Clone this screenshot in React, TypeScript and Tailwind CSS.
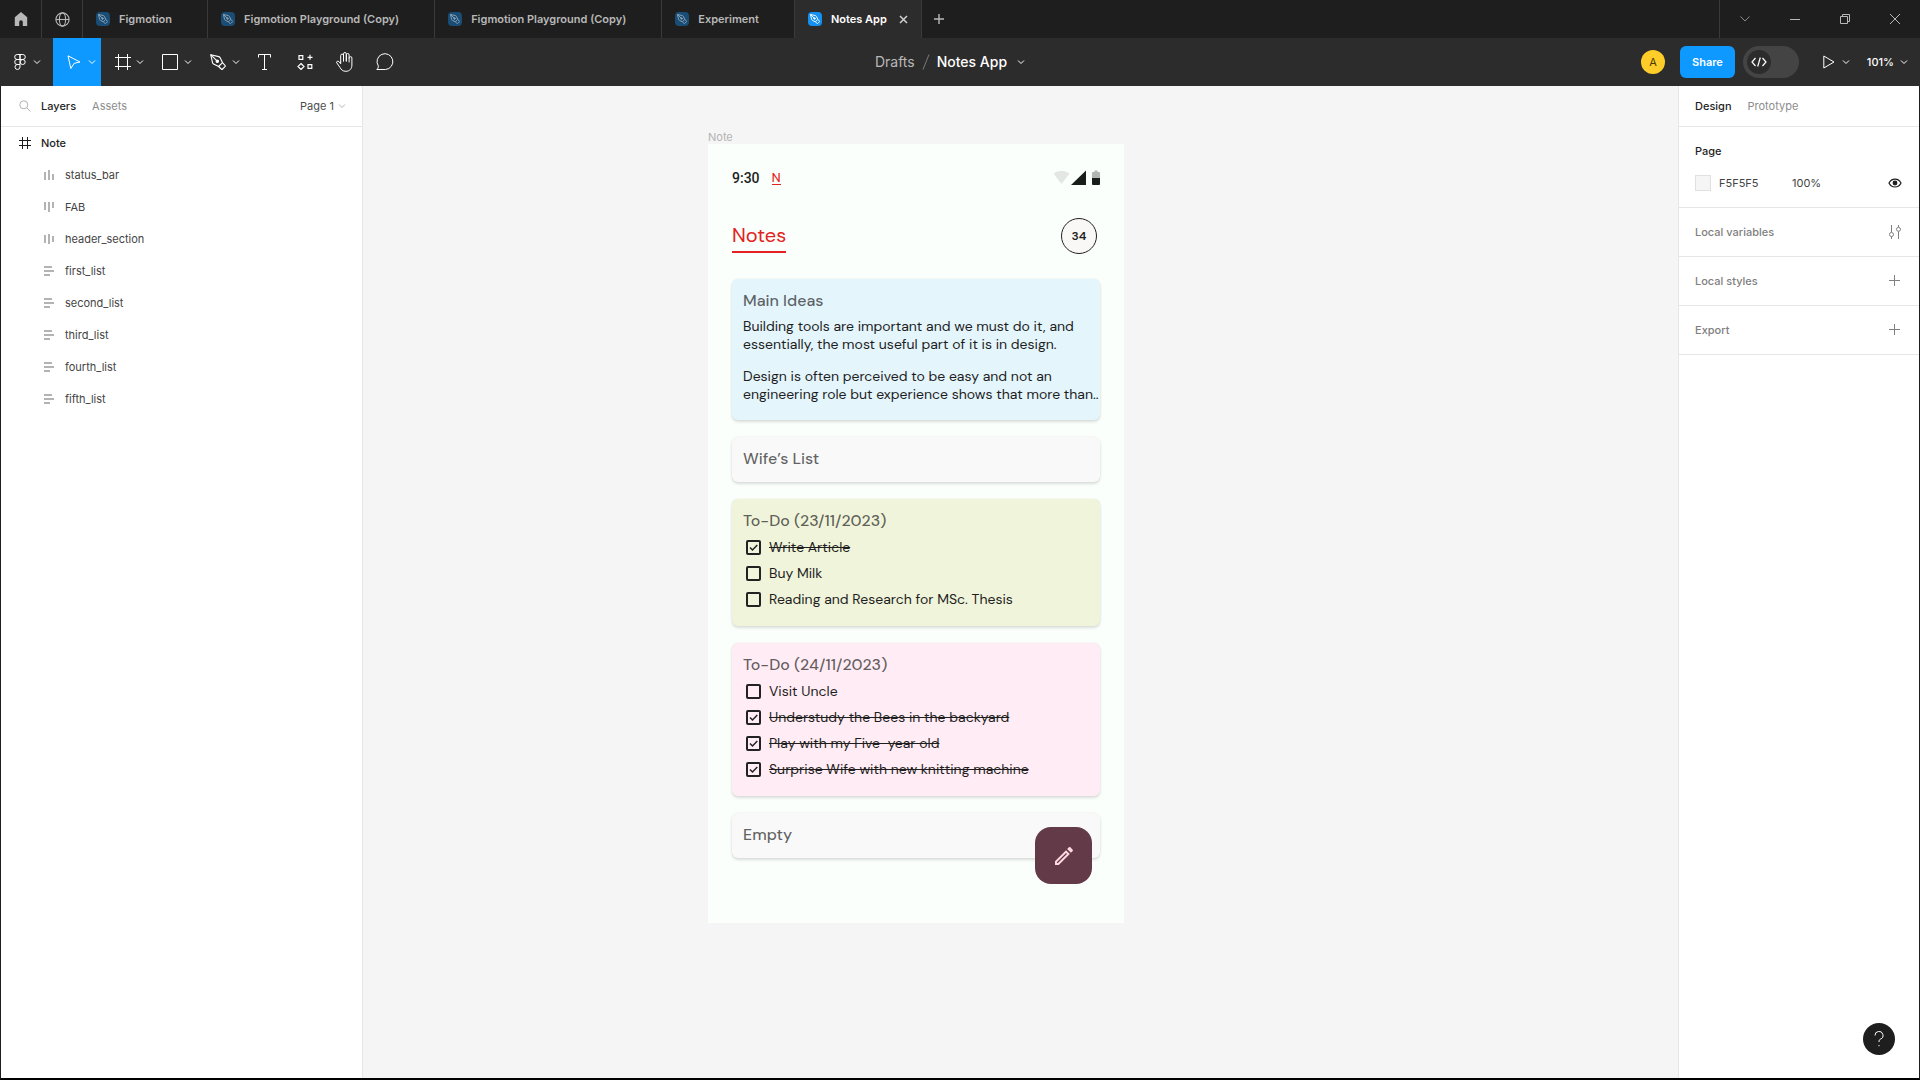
import React from 'react';
import clsx from 'clsx';

const ChevronDown = ({ className }: { className?: string }) => (
  <svg viewBox="0 0 8 8" className={clsx('w-2 h-2 shrink-0', className)} fill="none" stroke="currentColor">
    <path d="M1 2.5 4 5.5 7 2.5" />
  </svg>
);

const PenNib = ({ className, strokeWidth = 1.1 }: { className?: string; strokeWidth?: number }) => (
  <svg viewBox="0 0 16 16" className={className} fill="none" stroke="currentColor" strokeWidth={strokeWidth} strokeLinejoin="round">
    <path d="M.7.7 2.6 8.8c.2.8.8 1.2 1.4 1.5l4.6 2.2 3.9-3.9-2.2-4.6c-.3-.6-.8-1.2-1.5-1.4z" />
    <path d="M.7.7 6.7 6.7" />
    <circle cx="7.3" cy="7.3" r="1.2" fill="currentColor" />
    <path d="m12.5 8.6 2.5 2.7c.4.4.4.9 0 1.3l-2.4 2.4c-.4.4-.9.4-1.3 0l-2.7-2.5" />
  </svg>
);

const Plus = ({ className }: { className?: string }) => (
  <svg viewBox="0 0 12 12" className={className} fill="none" stroke="currentColor">
    <path d="M5.5 0v11M0 5.5h11" />
  </svg>
);

const tabs = [
  { name: 'Figmotion' },
  { name: 'Figmotion Playground (Copy)' },
  { name: 'Figmotion Playground (Copy)' },
  { name: 'Experiment' },
  { name: 'Notes App', active: true },
];

const TabBar = () => (
  <div className="flex h-[38px] bg-[#1e1e1e] text-[#b8b8b8] pl-px">
    <button aria-label="Home" className="w-10 flex items-center justify-center border-r border-[#3a3a3a] box-content">
      <svg viewBox="0 0 14 14" className="w-[14px] h-[14px]" fill="currentColor">
        <path d="M7 0 .8 5.2V14h4.4v-4a1.8 1.8 0 0 1 3.6 0v4h4.4V5.2z" />
      </svg>
    </button>
    <button aria-label="Community" className="w-10 flex items-center justify-center border-r border-[#3a3a3a] box-content">
      <svg viewBox="0 0 15 15" className="w-[15px] h-[15px]" fill="none" stroke="currentColor" strokeWidth="1.1">
        <circle cx="7.5" cy="7.5" r="6.6" />
        <ellipse cx="7.5" cy="7.5" rx="3.1" ry="6.6" />
        <path d="M1 7.5h13" />
      </svg>
    </button>
    {tabs.map((tab, i) => (
      <div
        key={i}
        className={clsx(
          'flex items-center border-r border-[#3a3a3a] pl-[13px] text-[11px] font-semibold',
          tab.active ? 'bg-[#2c2c2c] text-white pr-[13px]' : 'pr-[35px]'
        )}
      >
        <span
          className={clsx(
            'w-[14px] h-[14px] rounded-sm flex items-center justify-center mr-[9px]',
            tab.active ? 'bg-[#1490f0] text-white' : 'bg-[#194d76] text-[#8fa3b3]'
          )}
        >
          <PenNib className="w-[10px] h-[10px]" strokeWidth={1.5} />
        </span>
        <button>{tab.name}</button>
        {tab.active && (
          <button aria-label="Close tab" className="ml-3 text-[#d0d0d0]">
            <svg viewBox="0 0 9 9" className="w-[9px] h-[9px]" fill="none" stroke="currentColor" strokeWidth="1.5">
              <path d="m1 1 7 7M8 1 1 8" />
            </svg>
          </button>
        )}
      </div>
    ))}
    <button aria-label="New tab" className="px-3">
      <svg viewBox="0 0 10 10" className="w-[10px] h-[10px]" fill="none" stroke="currentColor" strokeWidth="1.4">
        <path d="M5 0v10M0 5h10" />
      </svg>
    </button>
    <div className="ml-auto flex border-l border-[#3a3a3a]">
      <button aria-label="Tabs menu" className="w-[50px] flex items-center justify-center text-[#8a8a8a]">
        <svg viewBox="0 0 10 10" className="w-[10px] h-[10px]" fill="none" stroke="currentColor">
          <path d="m.5 2.5 4.5 4.5 4.5-4.5" />
        </svg>
      </button>
      <button aria-label="Minimize" className="w-[50px] flex items-center justify-center">
        <svg viewBox="0 0 10 10" className="w-[10px] h-[10px]" fill="none" stroke="currentColor">
          <path d="M0 5.5h10" />
        </svg>
      </button>
      <button aria-label="Restore" className="w-[50px] flex items-center justify-center">
        <svg viewBox="0 0 10 10" className="w-[10px] h-[10px]" fill="none" stroke="currentColor">
          <path d="M.5 2.5h7v7h-7zM2.5 2.5v-2h7v7h-2" />
        </svg>
      </button>
      <button aria-label="Close" className="w-[50px] flex items-center justify-center">
        <svg viewBox="0 0 10 10" className="w-[10px] h-[10px]" fill="none" stroke="currentColor">
          <path d="m0 0 10 10M10 0 0 10" />
        </svg>
      </button>
    </div>
  </div>
);

const Toolbar = () => (
  <div className="grid grid-cols-[1fr_auto_1fr] h-12 bg-[#2c2c2c] text-white">
    <div className="flex pl-px">
      <button aria-label="Main menu" className="w-[52px] pl-[13px] flex items-center gap-[7px]">
        <svg viewBox="0 0 12 16" className="w-3 h-4" fill="none" stroke="currentColor">
          <path d="M6 .5H3.2a2.5 2.5 0 0 0 0 5H6zM6 5.5H3.2a2.5 2.5 0 0 0 0 5H6zM6 10.5H3.2a2.5 2.5 0 1 0 2.8 2.5zM6 .5h2.8a2.5 2.5 0 0 1 0 5H6z" />
          <circle cx="8.7" cy="8" r="2.5" />
        </svg>
        <ChevronDown />
      </button>
      <button aria-label="Move" className="w-12 pl-[14px] flex items-center gap-[7px] bg-[#0d99ff]">
        <svg viewBox="0 0 14 14" className="w-[14px] h-[14px]" fill="none" stroke="currentColor" strokeLinejoin="round">
          <path d="M1 .8 13 7 7.2 8.3 3.8 13.5z" />
        </svg>
        <ChevronDown />
      </button>
      <button aria-label="Frame" className="w-12 pl-[14px] flex items-center gap-[5px]">
        <svg viewBox="0 0 16 16" className="w-4 h-4" fill="none" stroke="currentColor">
          <path d="M3.5 0v16M12.5 0v16M0 3.5h16M0 12.5h16" />
        </svg>
        <ChevronDown />
      </button>
      <button aria-label="Rectangle" className="w-12 pl-[13px] flex items-center gap-1.5">
        <svg viewBox="0 0 16 16" className="w-4 h-4" fill="none" stroke="currentColor">
          <path d="M.5.5h15v15H.5z" />
        </svg>
        <ChevronDown />
      </button>
      <button aria-label="Pen" className="w-12 pl-[13px] flex items-center gap-1.5">
        <PenNib className="w-4 h-4" />
        <ChevronDown />
      </button>
      <button aria-label="Text" className="w-10 flex items-center justify-center">
        <svg viewBox="0 0 14 16" className="w-[14px] h-4" fill="none" stroke="currentColor">
          <path d="M.5 3.5v-3h12v3M6.5.5v15M4 15.5h5" />
        </svg>
      </button>
      <button aria-label="Resources" className="w-10 flex items-center justify-center">
        <svg viewBox="0 0 16 16" className="w-4 h-4" fill="none" stroke="currentColor" strokeWidth="1.2">
          <path d="M2 1.6h3.8v3.8H2zM11 10.6h3.8v3.8H11zM13 .8v5M10.5 3.3h5M4 9.5l3 3-3 3-3-3z" />
        </svg>
      </button>
      <button aria-label="Hand" className="w-10 flex items-center justify-center">
        <svg viewBox="0 0 18 20" className="w-[18px] h-5" fill="none" stroke="currentColor" strokeLinecap="round" strokeLinejoin="round">
          <path d="M4.7 10V3.5a1.4 1.4 0 0 1 2.8 0V9M7.5 9V1.9a1.4 1.4 0 0 1 2.8 0V9M10.3 9V2.900a1.4 1.4 0 0 1 2.8 0V10M13.1 6a1.4 1.4 0 0 1 2.8 0v7c0 4-2.500 6.300-6 6.300-3.200 0-4.700-1.500-6-4L.7 10.800c-.5-1.300 1-2.300 2.200-1.200l1.800 2.200V10" />
        </svg>
      </button>
      <button aria-label="Comment" className="w-10 flex items-center justify-center">
        <svg viewBox="0 0 18 18" className="w-[18px] h-[18px]" fill="none" stroke="currentColor" strokeLinejoin="round">
          <path d="M.8 16.5c1.2-1 1.7-2.3 1.5-3.6A7.9 7.9 0 1 1 9.500 16.500z" />
        </svg>
      </button>
    </div>
    <div className="flex items-center text-sm pr-5">
      <span className="text-[#b8b8b8]">Drafts</span>
      <svg viewBox="0 0 8 16" className="w-2 h-4 mx-[7px] text-[#7a7a7a]" fill="none" stroke="currentColor">
        <path d="M7 .5 1 15.500" />
      </svg>
      <button className="flex items-center gap-[10px] font-medium">
        Notes App
        <ChevronDown />
      </button>
    </div>
    <div className="flex items-center justify-end pr-3 text-[11px]">
      <span className="w-6 h-6 rounded-full bg-[#ffcd29] text-[#4a3a08] flex items-center justify-center">A</span>
      <button className="ml-[15px] h-8 px-3 rounded-md bg-[#0d99ff] font-semibold">Share</button>
      <button role="switch" aria-checked="false" aria-label="Dev mode" className="ml-2 w-14 h-8 p-1 rounded-full bg-[#444444]">
        <span className="w-6 h-6 rounded-full bg-[#2c2c2c] flex items-center justify-center">
          <svg viewBox="0 0 16 10" className="w-4 h-[10px]" fill="none" stroke="currentColor" strokeWidth="1.2">
            <path d="M4.5 1 1 5l3.5 4M11.5 1 15 5l-3.5 4M9.3.5 6.7 9.5" />
          </svg>
        </span>
      </button>
      <button aria-label="Present" className="ml-6 flex items-center gap-[7px]">
        <svg viewBox="0 0 12 14" className="w-3 h-[14px]" fill="none" stroke="currentColor">
          <path d="M.8 1v12L11 7z" />
        </svg>
        <ChevronDown />
      </button>
      <button className="ml-[17px] flex items-center gap-1.5 font-medium">
        101%
        <ChevronDown />
      </button>
    </div>
  </div>
);

// bar heights follow the auto layout alignment of each layer
const layerIcons: Record<string, string> = {
  bottom: 'M0 2h2v8H0zM4 0h2v10H4zM8 4h2v6H8z',
  top: 'M0 0h2v8H0zM4 0h2v10H4zM8 0h2v6H8z',
  middle: 'M0 1h2v8H0zM4 0h2v10H4zM8 2h2v6H8z',
  left: 'M0 0h8v2H0zM0 4h10v2H0zM0 8h6v2H0z',
};

const layers = [
  { name: 'status_bar', icon: 'bottom' },
  { name: 'FAB', icon: 'top' },
  { name: 'header_section', icon: 'middle' },
  { name: 'first_list', icon: 'left' },
  { name: 'second_list', icon: 'left' },
  { name: 'third_list', icon: 'left' },
  { name: 'fourth_list', icon: 'left' },
  { name: 'fifth_list', icon: 'left' },
];

const LayersPanel = () => (
  <aside className="w-[362px] shrink-0 bg-white border-r border-[#e6e6e6] text-[11px]">
    <div className="flex items-center h-[41px] border-b border-[#e6e6e6] pl-[18px] pr-4">
      <svg viewBox="0 0 12 12" className="w-3 h-3 text-[#b3b3b3]" fill="none" stroke="currentColor">
        <circle cx="4.8" cy="4.8" r="4" />
        <path d="m7.8 7.8 3.7 3.7" />
      </svg>
      <button className="ml-[10px] font-medium text-[#1e1e1e]">Layers</button>
      <button className="ml-4 text-[#8c8c8c]">Assets</button>
      <button className="ml-auto flex items-center gap-1 text-[#4d4d4d]">
        Page 1
        <ChevronDown className="text-[#b3b3b3]" />
      </button>
    </div>
    <div className="flex items-center h-8 pl-[18px] font-medium text-[#1e1e1e]">
      <svg viewBox="0 0 12 12" className="w-3 h-3 mr-[10px]" fill="none" stroke="currentColor">
        <path d="M3.5 0v12M8.5 0v12M0 3.5h12M0 8.5h12" />
      </svg>
      Note
    </div>
    <ul>
      {layers.map((layer) => (
        <li key={layer.name} className="flex items-center h-8 pl-[43px] text-[#444]">
          <svg viewBox="0 0 10 10" className="w-[10px] h-[10px] mr-[11px] text-[#b3b3b3]" fill="currentColor">
            <path d={layerIcons[layer.icon]} />
          </svg>
          {layer.name}
        </li>
      ))}
    </ul>
  </aside>
);

const Todo = ({ text, done }: { text: string; done?: boolean }) => (
  <label className="flex items-center h-[26px] pl-[3px]">
    <span className="grid mr-2">
      <input
        type="checkbox"
        defaultChecked={done}
        className="peer appearance-none col-start-1 row-start-1 w-[15px] h-[15px] rounded-xs border-2 border-[#222] bg-transparent"
      />
      <svg
        viewBox="0 0 15 15"
        className="col-start-1 row-start-1 w-[15px] h-[15px] invisible peer-checked:visible pointer-events-none"
        fill="none"
        stroke="#222"
        strokeWidth="1.5"
      >
        <path d="m4 7.5 2.5 2.5 4.8-5" />
      </svg>
    </span>
    <span className={clsx(done && 'line-through')}>{text}</span>
  </label>
);

const Card = ({ title, className, children }: { title: string; className: string; children?: React.ReactNode }) => (
  <section className={clsx('rounded-md shadow-[0_2px_3px_rgba(0,0,0,0.12),0_0_2px_rgba(0,0,0,0.08)] pt-[11px] px-[11px]', className)}>
    <h2 className="text-base leading-[22px] font-medium text-[#1e1e1e]/70">{title}</h2>
    {children}
  </section>
);

const Phone = () => (
  <div className="absolute left-[345px] top-11 w-[416px]">
    <div className="text-[11px] leading-[14px] text-[#b3b3b3]">Note</div>
    <div className="relative bg-[#fafffb] pt-6 px-6 pb-[65px] font-['DM_Sans',Inter,sans-serif] text-[#1e1e1e]">
      <div className="flex items-center h-5 font-[Roboto,sans-serif]">
        <span className="text-sm font-medium">9:30</span>
        <span className="ml-3 text-[13px] leading-3 text-[#e32222] border-b border-[#e32222]">N</span>
        <svg viewBox="0 0 48 16" className="ml-auto w-12 h-4">
          <path d="M1.500 3.500a13 13 0 0 1 16 0L9.500 14z" fill="#e3e6e3" />
          <path d="M34 .5V15H19z" fill="#161d1b" />
          <path d="M40 3a1 1 0 0 1 1-1h1.500V.5h3V2H47a1 1 0 0 1 1 1v5h-8z" fill="#b3b5b3" />
          <path d="M40 8h8v6a1 1 0 0 1-1 1h-6a1 1 0 0 1-1-1z" fill="#161d1b" />
        </svg>
      </div>
      <div className="flex items-center justify-between h-9 mt-[30px] mb-[25px] pr-[3px]">
        <h1 className="text-xl leading-8 text-[#e32222] border-b-2 border-[#e32222]">Notes</h1>
        <span className="w-9 h-9 rounded-full border border-[#222] bg-[#faf7f7] text-xs font-semibold flex items-center justify-center">34</span>
      </div>
      <div className="flex flex-col gap-[17px] text-sm leading-[18px]">
        <Card title="Main Ideas" className="bg-[#e4f5fc] pb-[17px]">
          <p className="mt-[5px]">
            Building tools are important and we must do it, and
            <br />
            essentially, the most useful part of it is in design.
          </p>
          <p className="mt-[14px] whitespace-nowrap">
            Design is often perceived to be easy and not an
            <br />
            engineering role but experience shows that more than..
          </p>
        </Card>
        <Card title="Wife’s List" className="bg-[#f9f9f9] pb-3" />
        <Card title="To-Do (23/11/2023)" className="bg-[#f0f4da] pb-[14px]">
          <div className="mt-0.5">
            <Todo text="Write Article" done />
            <Todo text="Buy Milk" />
            <Todo text="Reading and Research for MSc. Thesis" />
          </div>
        </Card>
        <Card title="To-Do (24/11/2023)" className="bg-[#ffecf4] pb-[14px]">
          <div className="mt-0.5">
            <Todo text="Visit Uncle" />
            <Todo text="Understudy the Bees in the backyard" done />
            <Todo text="Play with my Five-year old" done />
            <Todo text="Surprise Wife with new knitting machine" done />
          </div>
        </Card>
        <Card title="Empty" className="bg-[#f9f9f9] pb-3" />
      </div>
      <button aria-label="New note" className="absolute right-8 bottom-[39px] w-[57px] h-[57px] rounded-2xl bg-[#633b48] flex items-center justify-center">
        <svg viewBox="0 0 24 24" className="w-6 h-6" fill="#ffd9e2">
          <path d="M3 17.25V21h3.75L17.81 9.94l-3.75-3.75L3 17.25zM5.92 19H5v-.92l9.06-9.06.92.92L5.92 19zM20.71 7.04c.39-.39.39-1.02 0-1.41l-2.34-2.34c-.2-.2-.45-.29-.71-.29s-.51.1-.7.29l-1.83 1.83 3.75 3.75 1.83-1.83z" />
        </svg>
      </button>
    </div>
  </div>
);

const DesignPanel = () => (
  <aside className="w-[241px] shrink-0 bg-white border-l border-[#e6e6e6] text-[11px]">
    <div className="flex items-center h-[41px] gap-4 border-b border-[#e6e6e6] pl-4">
      <button className="font-medium text-[#1e1e1e]">Design</button>
      <button className="text-[#8c8c8c]">Prototype</button>
    </div>
    <section className="border-b border-[#e6e6e6] pt-2 pb-2 pl-4 pr-[17px]">
      <h3 className="h-8 flex items-center font-medium text-[#1e1e1e]">Page</h3>
      <div className="h-8 flex items-center text-[#444]">
        <span className="w-4 h-4 bg-[#f5f5f5] border border-[#e0e0e0]" />
        <span className="ml-2 w-[73px]">F5F5F5</span>
        <span>100%</span>
        <button aria-label="Toggle visibility" className="ml-auto">
          <svg viewBox="0 0 14 10" className="w-[14px] h-[10px]" fill="none" stroke="#1e1e1e" strokeWidth="1.2">
            <path d="M1 5C3.5-.3 10.5-.3 13 5 10.5 10.3 3.5 10.3 1 5z" />
            <circle cx="7" cy="5" r="1.8" fill="#1e1e1e" />
          </svg>
        </button>
      </div>
    </section>
    {['Local variables', 'Local styles', 'Export'].map((title) => (
      <section key={title} className="h-[49px] flex items-center justify-between border-b border-[#e6e6e6] pl-4 pr-[18px] font-medium text-[#808080]">
        {title}
        <button aria-label={title}>
          {title === 'Local variables' ? (
            <svg viewBox="0 0 12 14" className="w-3 h-[14px]" fill="none" stroke="currentColor">
              <path d="M2.5 0v7M2.5 11.5V14M9.5 0v2M9.5 6.5V14" />
              <circle cx="2.5" cy="9.5" r="2" />
              <circle cx="9.5" cy="4.3" r="2" />
            </svg>
          ) : (
            <Plus className="w-3 h-3" />
          )}
        </button>
      </section>
    ))}
  </aside>
);

const App: React.FC = () => {
  return (
    <div className="min-h-screen flex flex-col font-[Inter,sans-serif] antialiased">
      <TabBar />
      <Toolbar />
      <div className="flex-1 flex border-x border-b-2 border-x-[#1e1e1e] border-b-black">
        <LayersPanel />
        <main className="relative flex-1 bg-[#f5f5f5]">
          <Phone />
        </main>
        <DesignPanel />
      </div>
      <button aria-label="Help" className="fixed right-[25px] bottom-[25px] w-8 h-8 rounded-full bg-[#1e1e1e] text-white flex items-center justify-center">
        <svg viewBox="0 0 10 16" className="w-[10px] h-4" fill="none" stroke="currentColor">
          <path d="M1 4.5a4 4 0 1 1 5.5 3.6C5.3 8.7 5 9.3 5 11" />
          <path d="M5 14v1.2" />
        </svg>
      </button>
    </div>
  );
};

export default App;
